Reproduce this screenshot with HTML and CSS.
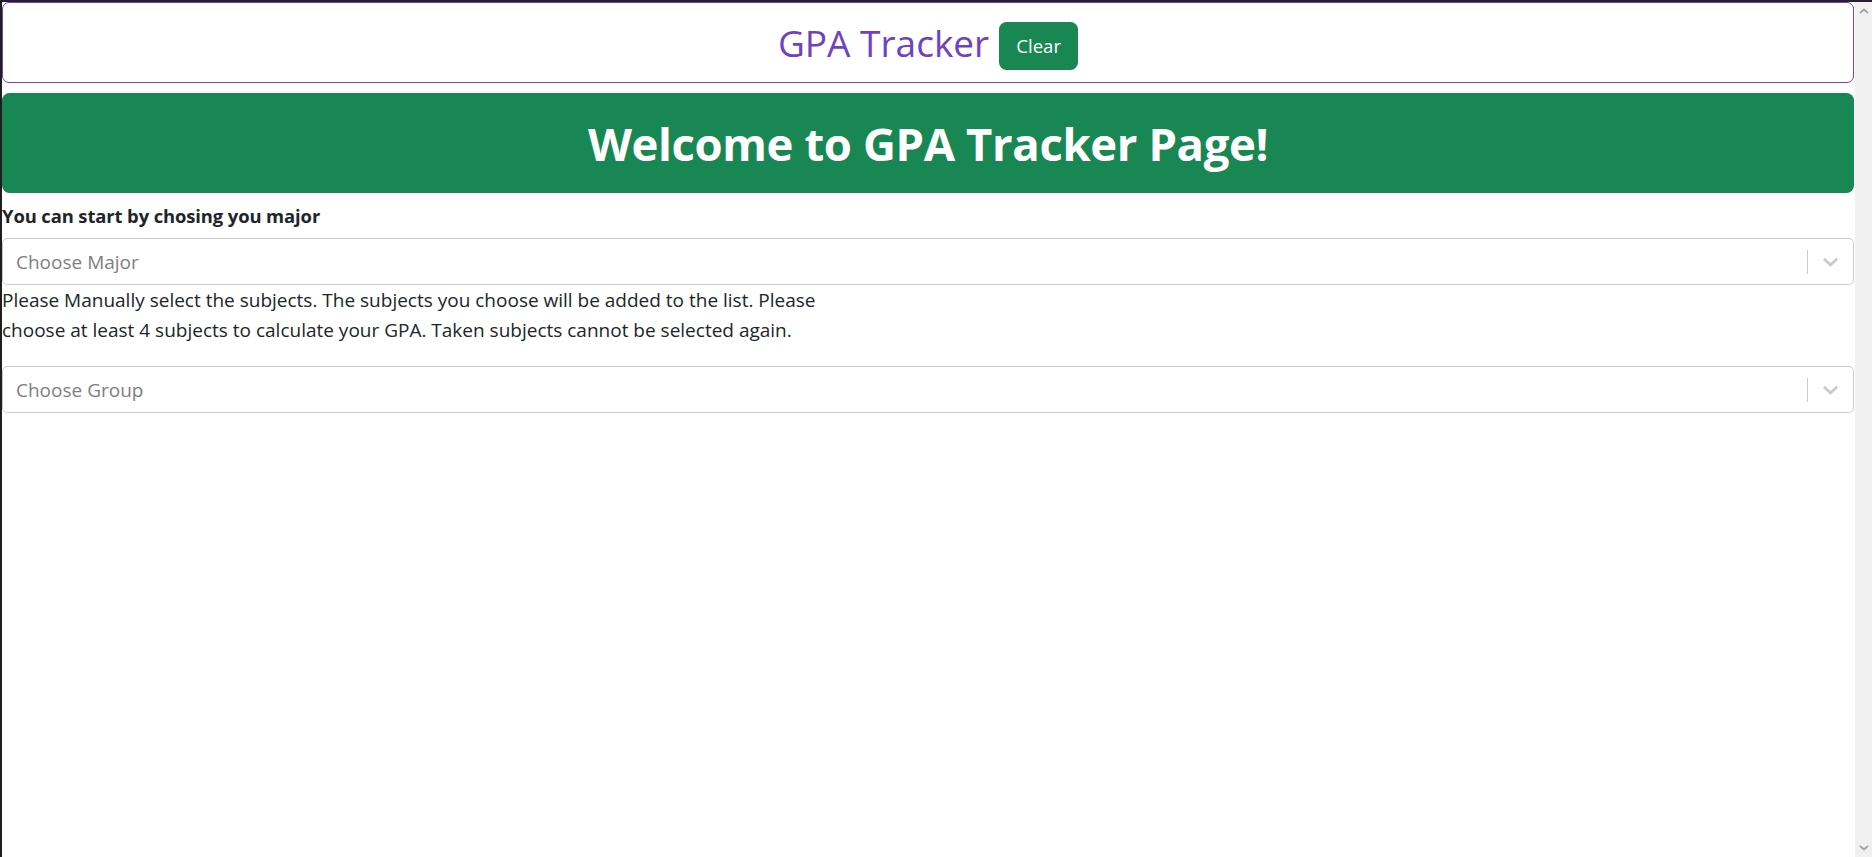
FILE: index.html
```html
<!DOCTYPE html>
<html lang="en">
<head>
<meta charset="utf-8">
<title>GPA Tracker</title>
<link rel="stylesheet" href="styles.css">
</head>
<body>
<div class="frame">
  <main class="page">
    <header class="topbar">
      <h2 class="brand">GPA Tracker</h2>
      <button class="btn-clear" type="button">Clear</button>
    </header>
    <section class="banner">
      <h1 class="banner-title">Welcome to GPA Tracker Page!</h1>
    </section>
    <label class="field-label">You can start by chosing you major</label>
    <div class="select">
      <div class="select-value">Choose Major</div>
      <div class="select-indicators">
        <span class="select-sep"></span>
        <span class="select-arrow">
          <svg viewBox="0 0 20 20" width="25" height="25" aria-hidden="true"><path d="M4.516 7.548c0.436-0.446 1.043-0.481 1.576 0l3.908 3.747 3.908-3.747c0.533-0.481 1.141-0.446 1.574 0 0.436 0.445 0.408 1.197 0 1.615-0.406 0.418-4.695 4.502-4.695 4.502-0.217 0.223-0.502 0.335-0.787 0.335s-0.57-0.112-0.789-0.335c0 0-4.287-4.084-4.695-4.502s-0.436-1.17 0-1.615z"/></svg>
        </span>
      </div>
    </div>
    <p class="hint">Please Manually select the subjects. The subjects you choose will be added to the list. Please choose at least 4 subjects to calculate your GPA. Taken subjects cannot be selected again.</p>
    <div class="select">
      <div class="select-value">Choose Group</div>
      <div class="select-indicators">
        <span class="select-sep"></span>
        <span class="select-arrow">
          <svg viewBox="0 0 20 20" width="25" height="25" aria-hidden="true"><path d="M4.516 7.548c0.436-0.446 1.043-0.481 1.576 0l3.908 3.747 3.908-3.747c0.533-0.481 1.141-0.446 1.574 0 0.436 0.445 0.408 1.197 0 1.615-0.406 0.418-4.695 4.502-4.695 4.502-0.217 0.223-0.502 0.335-0.787 0.335s-0.57-0.112-0.789-0.335c0 0-4.287-4.084-4.695-4.502s-0.436-1.17 0-1.615z"/></svg>
        </span>
      </div>
    </div>
  </main>
  <aside class="scrollbar">
    <svg class="sb-arrow" viewBox="0 0 10 6" width="10" height="6" aria-hidden="true"><path d="M1 5 L5 1.5 L9 5" fill="none" stroke="#a3a3a3" stroke-width="1.8"/></svg>
    <svg class="sb-arrow" viewBox="0 0 10 6" width="10" height="6" aria-hidden="true"><path d="M1 1 L5 4.5 L9 1" fill="none" stroke="#a3a3a3" stroke-width="1.8"/></svg>
  </aside>
</div>
</body>
</html>
```
FILE: styles.css
```css
* { box-sizing: border-box; }

html, body {
  margin: 0;
  padding: 0;
  background: #ffffff;
}

body {
  font-family: "Open Sans", "Noto Sans", sans-serif;
  font-size: 19px;
  color: #212529;
}

.frame {
  display: flex;
  height: 857px;
  border-top: 2px solid #261c33;
  border-left: 2px solid #1e1e1e;
  overflow: hidden;
}

.page {
  flex: 1;
  min-width: 0;
  padding-right: 1px;
}

.topbar {
  display: flex;
  justify-content: center;
  align-items: center;
  gap: 10px;
  height: 81px;
  border: 1px solid #6f42c1;
  border-radius: 7px;
}

.brand {
  margin: 0;
  font-size: 37px;
  font-weight: 400;
  line-height: 48px;
  color: #6f42c1;
}

.btn-clear {
  height: 48px;
  margin-top: 7px;
  padding: 0 17px;
  border: none;
  border-radius: 7.5px;
  background: #198754;
  color: #ffffff;
  font-family: inherit;
  font-size: 18.6px;
  line-height: 1;
}

.banner {
  margin-top: 10px;
  height: 100px;
  display: flex;
  align-items: center;
  justify-content: center;
  background: #198754;
  border-radius: 7.5px;
}

.banner-title {
  margin: 0;
  color: #ffffff;
  font-size: 45.5px;
  font-weight: 700;
  letter-spacing: -0.4px;
  line-height: 60px;
}

.field-label {
  display: block;
  margin-top: 8px;
  margin-bottom: 7px;
  font-size: 18.4px;
  font-weight: 700;
  letter-spacing: -0.1px;
  line-height: 30px;
}

.select {
  display: flex;
  align-items: center;
  height: 47px;
  border: 1px solid #cccccc;
  border-radius: 5px;
  background: #ffffff;
}

.select-value {
  flex: 1;
  padding-left: 13px;
  color: #808080;
}

.select-indicators {
  display: flex;
  align-items: center;
  align-self: stretch;
}

.select-sep {
  width: 1px;
  height: 24px;
  background: #cccccc;
}

.select-arrow {
  display: flex;
  padding: 0 10px;
  fill: #cccccc;
}

.hint {
  margin: 0 0 21px;
  max-width: 850px;
  line-height: 30px;
}

.scrollbar {
  width: 17px;
  flex: none;
  background: #f0f0f0;
  display: flex;
  flex-direction: column;
  justify-content: space-between;
  align-items: center;
  padding: 6px 0;
}
```
